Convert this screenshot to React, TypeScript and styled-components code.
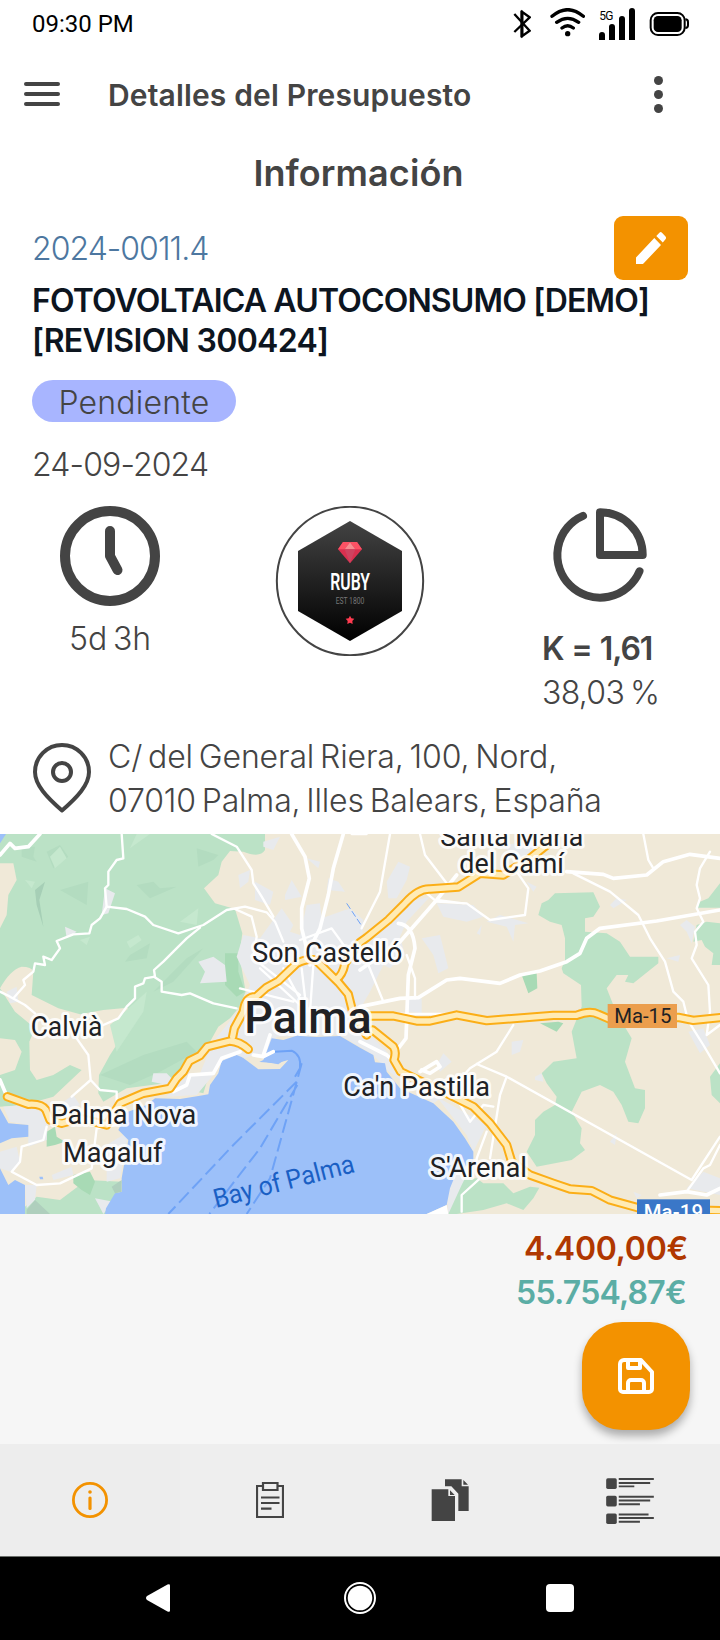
import React from "react";
import styled, { createGlobalStyle } from "styled-components";

const INK = "#444444";
const ORANGE = "#f39200";

const GlobalStyle = createGlobalStyle`
  * { box-sizing: border-box; }
  body { margin: 0; background: #fff; }
`;

const Screen = styled.div`
  width: 720px;
  height: 1640px;
  display: flex;
  flex-direction: column;
  background: #fff;
  color: ${INK};
  font-family: Inter, "Open Sans", sans-serif;
  overflow: hidden;
`;

const StatusBar = styled.div`
  height: 48px;
  padding: 0 31px 0 32px;
  display: flex;
  justify-content: space-between;
  color: #000;
  font-family: Roboto, sans-serif;
`;

const Clock = styled.span`
  font-size: 24px;
  line-height: 48px;
`;

const StatusIcons = styled.div`
  display: flex;
  align-items: flex-start;
  padding-top: 8px;

  svg { display: block; }
  svg + svg { margin-left: 13px; }
  svg:nth-child(2) { margin-left: 19px; }
  svg:nth-child(3) { margin-left: 14px; }
`;

const Line = styled.span<{ $size?: number; $weight?: number; $track?: number; $word?: number; $lh?: number; $color?: string; $drop?: number }>`
  display: block;
  white-space: nowrap;
  padding-top: ${(p) => p.$drop ?? 1}px;
  margin-bottom: -${(p) => p.$drop ?? 1}px;
  font-size: ${(p) => p.$size ?? 32}px;
  font-weight: ${(p) => p.$weight ?? 300};
  letter-spacing: ${(p) => p.$track ?? 0}px;
  word-spacing: ${(p) => p.$word ?? 0}px;
  line-height: ${(p) => p.$lh ?? 44}px;
  color: ${(p) => p.$color ?? "inherit"};
`;

const AppBar = styled.header`
  height: 94px;
  padding: 0 57px 0 24px;
  display: flex;
  align-items: center;
`;

const MenuButton = styled.div`
  width: 36px;
  margin: 0 48px 2px 0;
  display: flex;
  flex-direction: column;
  gap: 6px;

  i { height: 4px; border-radius: 2px; background: ${INK}; }
`;

const MoreButton = styled.div`
  margin: 0 0 2px auto;
  display: flex;
  flex-direction: column;
  gap: 5px;

  i { width: 9px; height: 9px; border-radius: 50%; background: ${INK}; }
`;

const Heading = styled.h1`
  margin: 7px 0 19px;
  padding-right: 3px;
  display: flex;
  justify-content: center;
  font: inherit;
`;

const Section = styled.section`
  padding: 0 32px;
`;

const CodeRow = styled.div`
  height: 64px;
  display: flex;
  align-items: center;
  justify-content: space-between;
`;

const EditButton = styled.button`
  width: 74px;
  height: 64px;
  padding: 0;
  border: 0;
  border-radius: 9px;
  background: ${ORANGE};
  display: flex;
  align-items: center;
  justify-content: center;
`;

const Badge = styled.div`
  width: 204px;
  height: 42px;
  margin: 20px 0;
  border-radius: 21px;
  background: #a8b5ff;
  display: flex;
  justify-content: center;
`;

const Stats = styled.div`
  margin-top: 20px;
  height: 228px;
  display: flex;
  padding-left: 28px;
`;

const Stat = styled.div<{ $width: number; $before?: number; $gap?: number; $start?: boolean }>`
  width: ${(p) => p.$width}px;
  margin-left: ${(p) => p.$before ?? 0}px;
  display: flex;
  flex-direction: column;
  align-items: ${(p) => (p.$start ? "flex-start" : "center")};
  svg { display: block; flex: none; margin-bottom: ${(p) => p.$gap ?? 0}px; }
`;

const Address = styled.div`
  height: 100px;
  display: flex;
  svg { margin: 8px 16px 0 0; flex: none; }
`;

const MapPanel = styled.div`
  height: 380px;
  svg { display: block; }
`;

const Footer = styled.section`
  height: 230px;
  padding: 12px 30px 0 0;
  background: #f6f6f6;
  display: flex;
  flex-direction: column;
  align-items: flex-end;
`;

const Amount = styled(Line)<{ $inset: number }>`
  margin-right: ${(p) => p.$inset}px;
`;

const SaveButton = styled.button`
  width: 108px;
  height: 108px;
  margin-top: 8px;
  padding: 0;
  border: 0;
  border-radius: 40px;
  background: ${ORANGE};
  box-shadow: 0 6px 8px rgba(0, 0, 0, 0.3);
  display: flex;
  align-items: center;
  justify-content: center;
`;

const Tabs = styled.nav`
  height: 113px;
  border-bottom: 1px solid #6b6f6b;
  display: grid;
  grid-template-columns: repeat(4, 1fr);
  background: #eeeeee;
`;

const Tab = styled.div<{ $active?: boolean; $drop?: number }>`
  display: flex;
  align-items: center;
  justify-content: center;
  padding-top: ${(p) => p.$drop ?? 0}px;
  background: ${(p) => (p.$active ? "#ededed" : "transparent")};
`;

const SystemNav = styled.div`
  flex: 1;
  padding: 25px 146px 26px;
  display: flex;
  justify-content: space-between;
  align-items: center;
  background: #000;
  svg { display: block; }
  svg:nth-child(2) { margin-left: 4px; }
`;

function StatusGlyphs() {
  return (
    <StatusIcons>
      <svg width="18" height="32" viewBox="461 24 54 96" fill="none" stroke="#000" strokeWidth="7">
        <path d="M465 42 511 92 489 108V36L511 52 465 96" />
        <path d="M487 32v80" strokeWidth="8" />
      </svg>
      <svg width="35" height="30" viewBox="571 24 105 90" fill="none" stroke="#000" strokeWidth="10" strokeLinecap="round">
        <path d="M577 49Q624 9 671 49M591 67Q624 43 657 67M607 84Q624 71 641 84" />
        <circle cx="624" cy="101" r="8" fill="#000" stroke="none" />
      </svg>
      <svg width="37" height="32" viewBox="717 24 111 96">
        <path d="M717 120v-15a9 9 0 0 1 18 0v15zM747 120V81a9 9 0 0 1 18 0v39zM777 120V57a9 9 0 0 1 18 0v63zM807 120V33a9 9 0 0 1 18 0v87z" />
        <text x="718" y="60" fontSize="36" textLength="42" fontFamily="Roboto, sans-serif">5G</text>
      </svg>
      <svg width="40" height="32" viewBox="868 24 120 96">
        <path d="M977 58q8 0 8 8v10q0 8-8 8" fill="#fff" stroke="#000" strokeWidth="6" />
        <rect x="873" y="39" width="102" height="66" rx="22" fill="#fff" stroke="#000" strokeWidth="6" />
        <rect x="882" y="48" width="84" height="48" rx="13" />
      </svg>
    </StatusIcons>
  );
}

function RubyLogo() {
  return (
    <svg width="150" height="150" viewBox="15 18 450 450">
      <defs>
        <linearGradient id="hex" x1="0" y1="0" x2="0" y2="1">
          <stop offset="0" stopColor="#434343" />
          <stop offset="1" stopColor="#000" />
        </linearGradient>
      </defs>
      <ellipse cx="240" cy="243" rx="219.500" ry="222.500" fill="#fff" stroke={INK} strokeWidth="6" />
      <path d="M240 63 396 153V333L240 423 84 333V153z" fill="url(#hex)" />
      <path d="M219 126h42l15 22-36 42-36-42z" fill="#d9304f" />
      <path d="M219 126h42l15 22h-20l-16-22-16 22h-20z" fill="#fb5264" />
      <path d="M240 127l16 21h-32z" fill="#f58d90" />
      <path d="M224 148h32l-16 42z" fill="#cf4360" />
      <text x="181" y="269" fontFamily="Roboto, sans-serif" fontWeight="600" fontSize="72" fill="#fff" textLength="119" lengthAdjust="spacingAndGlyphs">RUBY</text>
      <text x="197" y="311" fontFamily="Roboto, sans-serif" fontSize="25" fill="#777" textLength="86" lengthAdjust="spacingAndGlyphs">EST 1800</text>
      <path d="M240 347l4 8 9 1-6 7 1 9-8-4-8 4 1-9-6-7 9-1z" fill="#ff3b50" />
    </svg>
  );
}

const highways = [
  "M22 815 85 838Q125 835 138 855L150 885 185 895 240 880 320 900 360 835 430 805 510 790 530 760 550 740 568 708 600 692 622 665 690 648Q720 650 745 673",
  "M698 635 703 610 730 560Q735 515 768 515L800 487 835 468 890 415Q930 395 950 408L1015 472 1045 508 1058 560 1100 630",
  "M1010 462Q1028 450 1035 415L1080 352 1100 338 1165 285 1215 235Q1255 190 1290 192L1375 186 1440 145 1510 150 1590 100 1640 60 1665 27",
  "M1090 573 1180 573 1250 588 1290 588 1370 570 1460 587 1660 571 1730 571Q1770 555 1795 568L1830 583 1880 578 2035 577 2080 586 2160 578",
  "M1118 615 1180 665Q1190 680 1182 705L1202 740 1260 768 1340 805 1420 845 1470 895 1520 960 1535 1010 1590 1050 1660 1075 1710 1092 1775 1097 1830 1125 1920 1150 2160 1157",
];

const roads = [
  "M0 500 30 515 75 540 105 565M40 520 75 480 70 465 100 440 105 415 135 420 130 395 155 405 180 370 170 348 220 328 268 325 275 300 300 280 320 245 315 190 325 180 325 140 350 105 370 100 365 27",
  "M320 245 380 252 435 275 460 300 535 325 610 300 680 255 735 245 800 262 825 290 850 350",
  "M600 308 560 340 520 380 490 410 462 435 465 455 435 460 430 475 405 485 405 520 380 545 355 580 310 600",
  "M462 455 485 470 485 500 545 510 570 505 640 535 710 550",
  "M635 27 710 65 755 135 760 175 785 215 820 275",
  "M230 640 265 690 272 765 215 815M272 765 300 795 350 800 350 900 290 910 275 1030 180 1075 110 1080 35 1040 60 1010 65 965 130 945 140 905",
  "M705 252 755 275 770 335 760 400 900 510M720 490 880 530M780 430 900 540M850 430 910 540M905 430 920 560M940 420 930 560M900 345 995 310 1060 400",
  "M1055 27 1100 27M1170 27 1140 200 1085 310M1260 27 1275 90 1340 175M1390 235 1310 225M1550 140 1585 190 1575 270 1470 285 1400 235 1310 230 1280 205",
  "M1105 420 1150 530M1220 390 1245 460 1245 520M1150 567 1380 567M1540 600 1490 680 1410 730 1365 780M1430 717 1520 755 2075 1065 2160 935M1520 755 1500 810 1470 1000M1460 920 1430 1000 1430 1030M1370 820 1410 890 1450 840 1480 845",
  "M1720 145 1830 200 1915 270 1950 340 1995 410 2020 500 2050 530 2060 570M1930 27 1945 105 1960 130M2130 80 2100 130 2090 180 2100 220 2090 250 2110 290 2085 320 2090 360 2075 400 2125 480 2130 560 2120 630 2160 600",
  "M2060 580 2110 660 2160 745M2060 1100 2110 1030 2130 1020 2160 960M1440 1060 1385 1110 1385 1160",
];

const mainRoads = [
  "M875 27 915 95 928 160 905 250 905 310 915 350 930 420",
  "M1030 27 1000 130 985 210 960 310 940 350",
  "M1080 545 1200 520 1255 518 1340 465 1380 460 1500 475 1560 450 1620 438 1700 410 1740 385 1760 340 1800 310 1970 288 2160 255",
  "M1700 140 1810 148 1840 160 1940 150 1990 110 2070 88 2160 100",
  "M1080 435 1200 350 1310 225 1370 150M1195 295Q1240 300 1245 370L1225 450 1218 640 1195 670",
  "M790 690 810 630M760 690 790 695 820 680M520 800 560 780 570 750 640 745 665 700 720 680M1080 650 1160 690 1230 755",
  "M1260 740 1310 710 1320 725 1290 745 1265 735M1980 1110 2060 1100 2120 1110 2160 1090M0 765 20 812",
  "M0 90 30 55 45 70 85 65 120 27",
];

const greens = [
  "M0 27H795V75Q780 100 730 80L690 78 665 110 655 150 612 190 645 235 705 252 727 325 718 390 737 500 715 550 690 580 655 605 630 650 560 740 530 770 380 790 310 830 295 805 297 750 330 690 375 620 388 575 383 548 310 555 240 568 175 550 95 510 100 440Q95 425 65 425 30 435 0 490z",
  "M0 490 45 560 105 610 88 650 90 735 110 765 160 750 210 720 245 735 160 815 70 840 0 845V750L45 735 65 680 45 645 0 640z",
  "M1645 225 1665 205 1780 202 1800 245 1780 275 1755 280 1755 320 1820 325 1860 350 1890 395 1975 395 1975 415 1900 475 1875 470 1885 450 1850 450 1820 490 1840 540 1865 590 1895 640 1885 675 1875 710 1905 790 1935 795 1935 850 1915 895 1885 890 1865 840 1840 800 1800 780 1745 800 1715 860 1745 910 1740 955 1755 975 1715 1005 1610 1025 1580 980 1605 930 1605 885 1630 860 1665 840 1670 815 1640 775 1625 745 1660 710 1730 700 1715 620 1745 545 1743 480 1690 445 1685 430 1695 405 1695 340 1685 300 1650 290 1615 270 1625 235z",
  "M2160 175 2125 220 2100 230 2090 248 2160 248zM2090 300 2120 290 2160 295V420L2135 420 2140 385 2115 365 2105 345 2080 350zM2160 715 2130 755 2135 810 2160 835z",
  "M1370 1060 1430 1060 1450 1075 1510 1075 1540 1105 1590 1085 1618 1088 1600 1120 1570 1155 1520 1135 1450 1155 1370 1167 1345 1167z",
  "M75 1145 110 1115 180 1125 260 1065 365 1070 350 1120 320 1150 320 1167H75z",
  "M590 755 625 755 610 805 590 800zM725 615 770 590 785 615 770 640 730 640z",
];

const darkGreens = [
  "M675 385 715 385 715 440 735 500 710 515 675 480zM1565 450 1610 445 1612 490 1585 505zM1620 595 1675 590 1690 595 1670 620z",
  "M140 920 165 905 170 935 195 950 165 960 140 965zM220 1050 270 1040 285 1070 270 1110 245 1095 220 1075z",
];

const shades = [
  "M65 65 105 65 100 95 110 110 65 95zM140 80 180 60 205 95 160 130zM410 180 460 170 480 190 530 185 450 220zM180 195 265 170 260 240zM590 70 655 90 640 105 595 125zM390 390 450 355 440 400 375 410zM300 750 430 690 560 650 590 680 480 740 390 780zM460 500 560 400 610 370 520 470z",
];

const lightShades = [
  "M150 95 180 65 200 100 165 130zM75 165 105 170 95 190zM390 70 410 27 450 27zM380 350 415 330 425 345 390 370zM240 345 270 335 260 360zM330 600 440 500 430 560 350 680zM540 290 595 250 590 300z",
];

const urban = [
  "M315 190 345 205 325 265 305 270zM195 305 230 320 200 340zM20 500 50 485 55 530 30 535zM595 410 640 395 675 420 680 470 600 475 615 440z",
  "M790 50 840 35 820 75 790 65zM715 150 750 135 745 170 720 190zM765 170 820 200 810 240 765 225zM855 210 875 165 905 215 855 225zM920 100 960 110 955 130zM985 160 1015 170 1035 200 980 195z",
  "M710 395 730 330 780 340 845 250 880 300 870 320 900 330 920 240 960 235 965 280 1050 250 1090 285 1085 370 1170 290 1215 240 1250 225 1290 215 1220 290 1200 335 1215 390 1170 430 1150 420 1110 500 1090 535 1100 620 1160 680 1230 750 1270 790 1330 815 1300 835 1160 735 1120 690 1020 630 830 635 800 700 760 690 735 700 660 710 640 750 590 810 500 815 530 770 600 745 640 650 720 550 750 480z",
  "M455 770 460 745 500 745 520 765 500 780zM10 845 75 840 145 870 140 945 85 965 85 900 30 890zM0 980 50 965 60 1010 30 1040 0 1030zM190 830 220 810 240 840 190 860zM75 1080 110 1080 105 1125 80 1150zM320 960 385 920 360 1060 320 1070zM155 1050 215 1025 220 1050 160 1065zM285 1120 340 1130 310 1167z",
  "M1160 170 1195 110 1230 125 1220 165 1190 220 1165 220zM1310 235 1420 240 1450 275 1400 290 1330 275zM1460 290 1500 270 1585 295 1545 300 1540 350 1520 305zM1265 340 1320 330 1345 430 1315 445 1300 390zM1430 325 1445 300 1440 330zM1225 520 1265 520 1265 565 1225 560zM1535 650 1570 645 1560 680 1535 690zM1310 720 1330 685 1355 710 1320 740z",
  "M1830 240 1850 220 1880 225 1840 250zM2040 300 2060 285 2085 305 2075 355 2060 320zM2065 620 2110 610 2130 660 2100 685zM2060 1090 2110 1040 2160 1060 2160 1110zM2000 400 2040 390 2035 410zM1605 755 1625 745 1630 770 1605 765zM1830 950 1850 925 1845 960zM1900 1100 1925 1110 1910 1120zM1420 980 1460 900 1310 815 1400 930zM1350 1060 1420 1010 1385 1080 1345 1167 1340 1110zM1500 60 1600 50 1630 90 1560 100zM1580 170 1610 185 1600 200z",
];

const places: { text: string; x: number; y: number; w: number; size?: number; weight?: number }[] = [
  { text: "Santa María", x: 1321, y: 63, w: 429 },
  { text: "del Camí", x: 1378, y: 144, w: 314 },
  { text: "Son Castelló", x: 757, y: 410, w: 450 },
  { text: "Palma", x: 733, y: 624, w: 382, size: 134, weight: 500 },
  { text: "Calvià", x: 92, y: 633, w: 215 },
  { text: "Ca'n Pastilla", x: 1030, y: 812, w: 440 },
  { text: "Palma Nova", x: 152, y: 896, w: 437 },
  { text: "Magaluf", x: 189, y: 1012, w: 298 },
  { text: "S'Arenal", x: 1289, y: 1055, w: 292 },
];

function RegionMap() {
  return (
    <svg width="720" height="380" viewBox="0 27 2160 1140" fontFamily="Roboto, sans-serif">
      <rect y="27" width="2160" height="1140" fill="#f0e9d8" />
      {greens.map((d) => <path key={d} d={d} fill="#bbe2c6" />)}
      <path d="M0 115 40 115 50 165 25 210 20 270 0 310z" fill="#f0e9d8" />
      {shades.map((d) => <path key={d} d={d} fill="#b3dcc0" />)}
      {lightShades.map((d) => <path key={d} d={d} fill="#c5e8ce" />)}
      <path d="M105 195 135 170 118 225 130 305 110 240z" fill="#a6cfb6" />
      {darkGreens.map((d) => <path key={d} d={d} fill="#a8dab5" />)}
      {urban.map((d) => <path key={d} d={d} fill="#e8eaed" />)}
      <g fill="#9cc0f9">
        <path d="M315 1167 318 1150 345 1105 365 1100 365 1060 385 945 355 915 380 862 440 840 465 820 540 822 600 812 625 808 630 780 655 745 665 708 710 690 770 715 790 705 800 680 815 640 850 645 890 632 950 636 1020 633 1080 668 1120 690 1125 712 1155 715 1160 740 1200 790 1300 835 1360 890 1395 940 1420 980 1420 1010 1370 1040 1350 1090 1340 1140 1280 1167z" />
        <path d="M0 850 25 895 85 900V935L35 940 0 955zM0 1030 25 1080 45 1065 75 1080V1167H0zM0 27H18L0 55zM118 1055h10l2 8h-10z" />
      </g>
      <path d="M725 695 770 710 830 715 865 705 840 732 775 733z" fill="#f0e9d8" />
      <path d="M800 712 860 700 835 718z" fill="#9cc0f9" />
      <path d="M335 1085 365 1065V1100L345 1105zM80 1155 105 1125 150 1167H80z" fill="#afcfbd" />
      <path d="M1280 1167 1340 1140 1345 1167z" fill="#fff" />
      <g fill="none" stroke="#fff" strokeLinejoin="round" strokeLinecap="round">
        {roads.map((d) => <path key={d} d={d} strokeWidth="7" />)}
        {mainRoads.map((d) => <path key={d} d={d} strokeWidth="11" />)}
      </g>
      <g fill="none" stroke="#6ea2f6" strokeWidth="6">
        <path d="M825 680 875 677Q905 690 900 730L885 755" />
        <path d="M890 770 700 960 505 1167M892 780 780 970 628 1167M905 715 885 790 810 1060 740 1167" strokeDasharray="42 16" />
        <path d="M1040 235 1082 298" strokeWidth="3" strokeDasharray="20 8" />
      </g>
      <g fill="none" strokeLinejoin="round" strokeLinecap="round">
        {highways.map((d) => <path key={d} d={d} stroke="#fbae17" strokeWidth="28" />)}
        {highways.map((d) => <path key={d} d={d} stroke="#ffebb5" strokeWidth="16" />)}
      </g>
      {places.map((p) => (
        <text
          key={p.text}
          x={p.x}
          y={p.y}
          fontSize={p.size ?? 81}
          fontWeight={p.weight ?? 400}
          textLength={p.w}
          lengthAdjust="spacingAndGlyphs"
          fill="#202124"
          stroke="#fff"
          strokeOpacity="0.85"
          strokeWidth="18"
          strokeLinejoin="round"
          paintOrder="stroke"
        >
          {p.text}
        </text>
      ))}
      <text transform="translate(648 1149) rotate(-14.500)" fontSize="79" fill="#1a5fc4" textLength="434" lengthAdjust="spacingAndGlyphs">Bay of Palma</text>
      <rect x="1823" y="537" width="208" height="72" fill="#eb9e4d" />
      <text x="1843" y="595" fontSize="61" fill="#202124" textLength="171">Ma-15</text>
      <rect x="1911" y="1123" width="219" height="60" fill="#3a77c8" />
      <text x="1931" y="1181" fontSize="61" fontWeight="500" fill="#fff" textLength="178">Ma-19</text>
    </svg>
  );
}

export default function App() {
  return (
    <Screen>
      <GlobalStyle />
      <StatusBar>
        <Clock>09:30 PM</Clock>
        <StatusGlyphs />
      </StatusBar>

      <AppBar>
        <MenuButton><i /><i /><i /></MenuButton>
        <Line $size={30} $weight={600} $lh={40} $track={0.15} $drop={0}>Detalles del Presupuesto</Line>
        <MoreButton><i /><i /><i /></MoreButton>
      </AppBar>

      <Heading>
        <Line $size={36} $weight={600} $lh={48} $track={0.1} $drop={0}>Información</Line>
      </Heading>

      <Section>
        <CodeRow>
          <Line $color="#4d77a0" $track={-0.97}>2024-0011.4</Line>
          <EditButton aria-label="Editar">
            <svg width="30" height="32" viewBox="0 0 30 32" fill="#fff">
              <path d="M0 25.500 18.300 6 25 13 7 32H0zM20.300 4 23.400.700a1.900 1.900 0 0 1 2.600 0L29.500 4.600a2 2 0 0 1 0 2.600L26.800 10.600z" />
            </svg>
          </EditButton>
        </CodeRow>
        <Line $weight={600} $lh={40} $track={-0.84} $color="#0d151f">FOTOVOLTAICA AUTOCONSUMO [DEMO]</Line>
        <Line $weight={600} $lh={40} $track={-0.68} $color="#0d151f">[REVISION 300424]</Line>
        <Badge><Line $track={0.2}>Pendiente</Line></Badge>
        <Line $track={-0.87}>24-09-2024</Line>

        <Stats>
          <Stat $width={100} $gap={10}>
            <svg width="100" height="100" viewBox="0 0 100 100" fill="none" stroke={INK} strokeWidth="10" strokeLinecap="round" strokeLinejoin="round">
              <circle cx="50" cy="50" r="45" />
              <path d="M50 25V50L57.500 64" />
            </svg>
            <Line $track={-0.1} $word={-3}>5d 3h</Line>
          </Stat>
          <Stat $width={150} $before={115}><RubyLogo /></Stat>
          <Stat $width={114} $before={117} $gap={20} $start>
            <svg width="114" height="100" viewBox="-58 -49 114 100" fill="none" stroke={INK} strokeWidth="8" strokeLinecap="round" strokeLinejoin="round">
              <path d="M39.500 16.300A42.700 42.700 0 1 1-17-39.200" />
              <path d="M0-42.700A42.700 42.700 0 0 1 42.700 0H0z" />
            </svg>
            <Line $weight={600} $track={-1.1} $word={1}>K = 1,61</Line>
            <Line $track={-0.7} $word={-2.5}>38,03 %</Line>
          </Stat>
        </Stats>

        <Address>
          <svg width="60" height="72" viewBox="0 0 60 72" fill="none" stroke={INK} strokeWidth="4" strokeLinejoin="round">
            <path d="M30 68.500C15 55.500 3 43 3 30A27 27 0 0 1 57 30C57 43 45 55.500 30 68.500z" />
            <circle cx="30" cy="30" r="9" />
          </svg>
          <div>
            <Line $track={-0.13} $word={-3}>C/ del General Riera, 100, Nord,</Line>
            <Line $track={-0.16} $word={-3}>07010 Palma, Illes Balears, España</Line>
          </div>
        </Address>
      </Section>

      <MapPanel><RegionMap /></MapPanel>

      <Footer>
        <Amount $weight={600} $track={-0.25} $inset={2} $color="#b03800">4.400,00€</Amount>
        <Amount $weight={600} $track={-0.75} $inset={4} $color="#5bada5">55.754,87€</Amount>
        <SaveButton aria-label="Guardar">
          <svg width="36" height="36" viewBox="0 0 36 36" fill="none" stroke="#fff" strokeWidth="4" strokeLinejoin="round">
            <path d="M6 2H23L34 14V31a3 3 0 0 1-3 3H5a3 3 0 0 1-3-3V6a4 4 0 0 1 4-4z" />
            <path d="M10 2V10H22V2M10 34V25a3 3 0 0 1 3-3H23a3 3 0 0 1 3 3V34" />
          </svg>
        </SaveButton>
      </Footer>

      <Tabs>
        <Tab $active>
          <svg width="36" height="36" viewBox="0 0 36 36" fill={ORANGE}>
            <circle cx="18" cy="18" r="16.600" fill="none" stroke={ORANGE} strokeWidth="2.800" />
            <circle cx="18" cy="10" r="1.800" />
            <rect x="16.400" y="14.500" width="3.200" height="13.500" rx="1.500" />
          </svg>
        </Tab>
        <Tab>
          <svg width="28" height="36" viewBox="0 0 28 36" fill="none" stroke={INK} strokeWidth="2.200">
            <path d="M6 4H1V35H27V4H22M7 1H21.500V8H7zM5 15.500H23.500M5 21H23.500M5 26.700H15.500" />
          </svg>
        </Tab>
        <Tab>
          <svg width="38" height="43" viewBox="213 806 114 129" fill={INK}>
            <path d="M215 837H265V857H285V932H215zM270 840 284 854H270zM255 807H305V828H326V902H295V850L274 828H255zM310 809 324 823H310z" />
          </svg>
        </Tab>
        <Tab $drop={1}>
          <svg width="48" height="46" viewBox="738 803 144 139" fill={INK}>
            <path d="M776 803h106v6H776zM776 815h95v6h-95zM776 826h47v5h-47zM776 857h106v6H776zM776 868h95v6h-95zM776 879h64v6h-64zM776 910h90v6h-90zM776 921h106v6H776zM776 932h64v6h-64z" />
            <rect x="738" y="804" width="32" height="32" rx="5" />
            <rect x="738" y="857" width="32" height="32" rx="5" />
            <rect x="738" y="910" width="32" height="32" rx="5" />
          </svg>
        </Tab>
      </Tabs>

      <SystemNav>
        <svg width="24" height="28" viewBox="0 0 24 28" fill="#fff">
          <path d="M24 1.500V26.500Q24 28.500 21.500 27.500L1 16Q-1 14 1 12L21.500.500Q24-.500 24 1.500z" />
        </svg>
        <svg width="32" height="32" viewBox="0 0 32 32" fill="#fff">
          <circle cx="16" cy="16" r="15" fill="none" stroke="#fff" strokeWidth="2" />
          <circle cx="16" cy="16" r="12.300" />
        </svg>
        <svg width="28" height="28" viewBox="0 0 28 28" fill="#fff">
          <rect width="28" height="28" rx="4" />
        </svg>
      </SystemNav>
    </Screen>
  );
}
